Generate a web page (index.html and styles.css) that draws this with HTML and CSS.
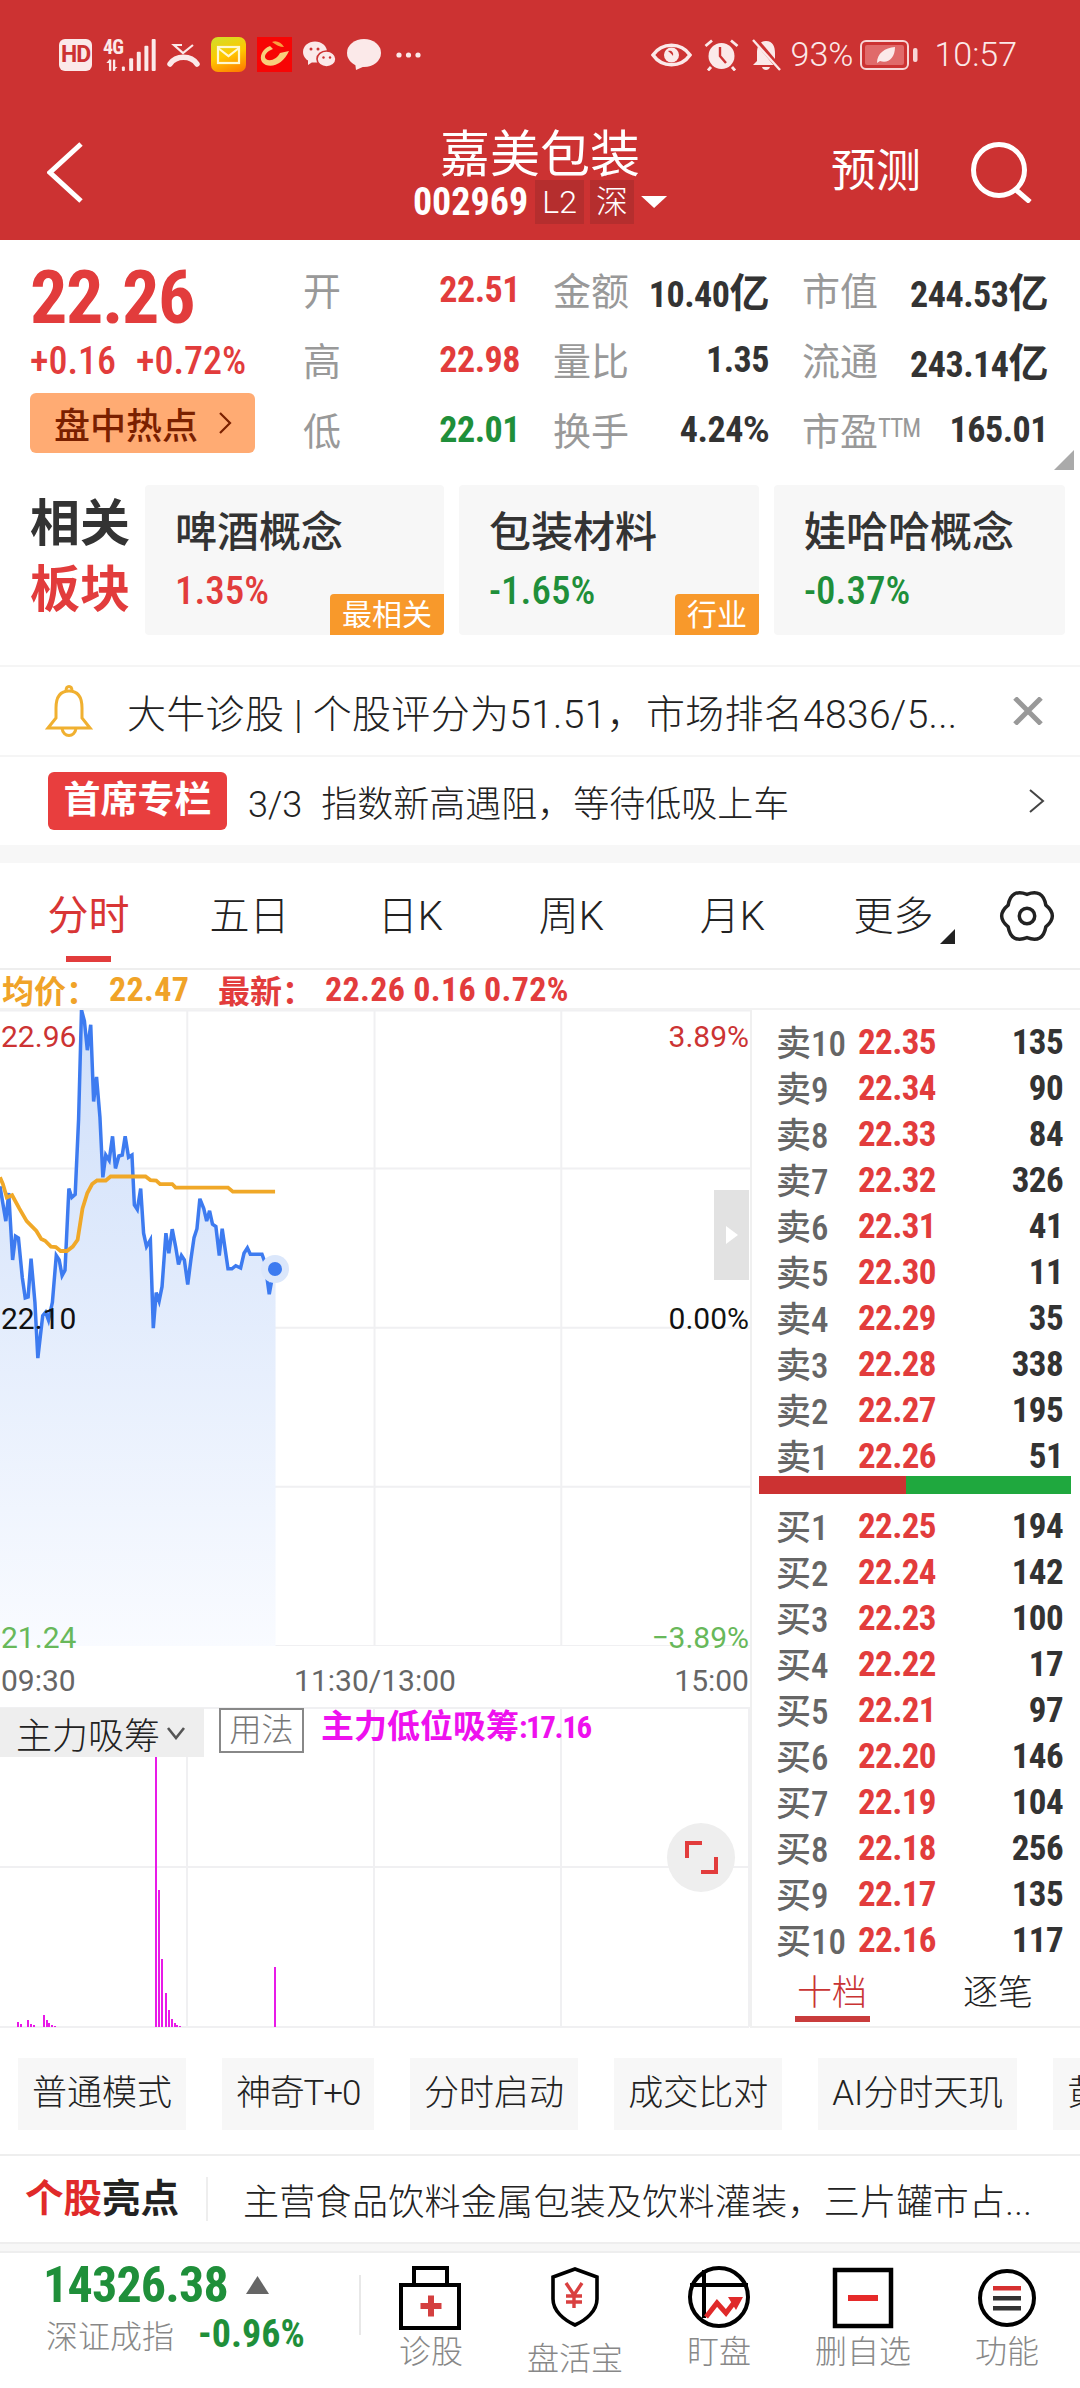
FILE: index.html
```html
<!DOCTYPE html>
<html lang="zh-CN">
<head>
  <meta charset="UTF-8">
  <meta name="viewport" content="width=device-width, initial-scale=1.0">
  <title>嘉美包装</title>
  <link rel="stylesheet" href="styles.css">
</head>
<body>
  <div class="page">
    <header class="topbar">
      <div class="status">
        <div class="status-left">
          <span class="hd">HD</span>
          <span class="signal">
            <span class="sig-text">4G</span>
            <svg class="i-signal" viewBox="0 0 160 96">
              <rect x="18" y="62" width="7" height="34" fill="#fbe9e9"/>
              <path d="M10 72L21 60L21 72Z" fill="#fbe9e9"/>
              <rect x="30" y="62" width="7" height="34" fill="#fbe9e9"/>
              <path d="M30 84L44 84L30 96Z" fill="#fbe9e9"/>
              <rect x="57" y="83" width="9" height="13" rx="3" fill="#fbe9e9"/>
              <rect x="79" y="58" width="12" height="38" rx="3" fill="#fbe9e9"/>
              <rect x="102" y="38" width="12" height="58" rx="3" fill="#fbe9e9"/>
              <rect x="125" y="20" width="12" height="76" rx="3" fill="#fbe9e9"/>
              <rect x="147" y="0" width="12" height="96" rx="3" fill="#fbe9e9"/>
            </svg>
          </span>
          <svg class="i-call" viewBox="0 0 33 25">
            <path d="M15 3H7L16 11L26 3" fill="none" stroke="#fbe9e9" stroke-width="2.2"/>
            <path d="M3 22C9 13 24 13 30 22" fill="none" stroke="#fbe9e9" stroke-width="5.5" stroke-linecap="round"/>
          </svg>
          <span class="app-mail">
            <svg viewBox="0 0 35 35">
              <rect x="7" y="10" width="21" height="16" fill="none" stroke="#fff8d0" stroke-width="2.2"/>
              <path d="M7 11L17.5 19L28 11" fill="none" stroke="#fff8d0" stroke-width="2.2"/>
            </svg>
          </span>
          <svg class="i-app" viewBox="0 0 35 35">
            <rect width="35" height="35" fill="#f70505"/>
            <path d="M5 25C12 33 26 28 32 14L23 16C20 22 13 25 9 22C6 19 10 14 16 12L13 9C5 12 2 20 5 25Z" fill="#f8cf7c"/>
            <path d="M15 5C19 3 24 5 27 10C23 10 19 8 15 5Z" fill="#f8a040"/>
          </svg>
          <svg class="i-wechat" viewBox="0 0 33 27">
            <ellipse cx="12" cy="11" rx="12" ry="10.5" fill="#fbe9e9"/>
            <path d="M5 18L5 24L11 20Z" fill="#fbe9e9"/>
            <ellipse cx="23.5" cy="18" rx="9.5" ry="8" fill="#fbe9e9" stroke="#cc3232" stroke-width="1.6"/>
            <circle cx="8" cy="8" r="1.5" fill="#cc3232"/>
            <circle cx="15" cy="8" r="1.5" fill="#cc3232"/>
            <circle cx="20.5" cy="16.5" r="1.2" fill="#cc3232"/>
            <circle cx="27" cy="16.5" r="1.2" fill="#cc3232"/>
          </svg>
          <svg class="i-msg" viewBox="0 0 34 31">
            <ellipse cx="17" cy="14" rx="17" ry="14" fill="#fbe9e9"/>
            <path d="M8 23L9 31L18 27Z" fill="#fbe9e9"/>
          </svg>
          <svg class="i-dots" viewBox="0 0 25 6">
            <circle cx="3" cy="3" r="2.6" fill="#fbe9e9"/>
            <circle cx="12.5" cy="3" r="2.6" fill="#fbe9e9"/>
            <circle cx="22" cy="3" r="2.6" fill="#fbe9e9"/>
          </svg>
        </div>
        <div class="status-right">
          <svg class="i-eye" viewBox="0 0 41 24">
            <path d="M2 12C11 -1 30 -1 39 12C30 25 11 25 2 12Z" fill="none" stroke="#fbe9e9" stroke-width="3.6"/>
            <circle cx="20.5" cy="12" r="7.5" fill="#fbe9e9"/>
            <path d="M17 8C20 7 23 9 22 13C21 11 19 10 17 8Z" fill="#cc3232"/>
          </svg>
          <svg class="i-alarm" viewBox="0 0 35 32">
            <circle cx="17.5" cy="17" r="13" fill="#fbe9e9"/>
            <path d="M1.5 7L8 1.5M27 1.5L33.5 7M7 28L4 31.5M28 28L31 31.5" stroke="#fbe9e9" stroke-width="2.8" fill="none"/>
            <path d="M16 8V17L22 24" stroke="#cc3232" stroke-width="2.4" fill="none"/>
          </svg>
          <svg class="i-bell" viewBox="0 0 31 33">
            <path d="M15 3C8 3 6 9 6 15V23L2 27H28L24 23V15C24 9 22 3 15 3Z" fill="#fbe9e9"/>
            <path d="M11 29C12 33 18 33 19 29Z" fill="#fbe9e9"/>
            <path d="M3 0L30 32" stroke="#cc3232" stroke-width="5"/>
            <path d="M2 2L29 32" stroke="#fbe9e9" stroke-width="2.4"/>
          </svg>
          <span class="st-text st-pct">93%</span>
          <svg class="i-batt" viewBox="0 0 59 30">
            <rect x="1" y="1" width="47" height="28" rx="5" fill="none" stroke="#f7d6d6" stroke-width="2"/>
            <rect x="5" y="5" width="39" height="20" rx="2" fill="#e06a6a"/>
            <rect x="53" y="8" width="4.5" height="14" rx="2" fill="#f7d6d6"/>
            <path d="M17 23C17 13 25 8 35 7C35 18 28 24 20 21Z" fill="#fbe9e9"/>
          </svg>
          <span class="st-text st-time">10:57</span>
        </div>
      </div>
      <nav class="navbar">
        <div class="nav-side">
          <svg class="i-back" viewBox="0 0 36 61">
            <path d="M34 2L3 30.5L34 59" fill="none" stroke="#fff" stroke-width="5"/>
          </svg>
        </div>
        <div class="nav-title">
          <div class="stock-name">嘉美包装</div>
          <div class="stock-sub">
            <span class="stock-code num">002969</span>
            <span class="sub-box box-l2">L2</span>
            <span class="sub-box box-sz">深</span>
            <span class="sub-arrow"></span>
          </div>
        </div>
        <div class="nav-side nav-right">
          <span class="nav-link">预测</span>
          <svg class="i-search" viewBox="0 0 62 61">
            <circle cx="28" cy="28" r="25.5" fill="none" stroke="#fff" stroke-width="5"/>
            <path d="M44 47L59 60" stroke="#fff" stroke-width="5"/>
          </svg>
        </div>
      </nav>
    </header>

    <section class="quote">
      <div class="quote-main">
        <div class="price num">22.26</div>
        <div class="change num"><span>+0.16</span><span>+0.72%</span></div>
        <div class="hot-btn">盘中热点
          <svg class="i-hot" viewBox="0 0 14 24"><path d="M2 2L12 12L2 22" fill="none" stroke="#7a2000" stroke-width="2.2"/></svg>
        </div>
      </div>
      <div class="stats">
        <div class="stat"><span class="lbl">开</span><span class="val num up">22.51</span></div>
        <div class="stat"><span class="lbl">金额</span><span class="val num">10.40<i class="unit">亿</i></span></div>
        <div class="stat"><span class="lbl">市值</span><span class="val num">244.53<i class="unit">亿</i></span></div>
        <div class="stat"><span class="lbl">高</span><span class="val num up">22.98</span></div>
        <div class="stat"><span class="lbl">量比</span><span class="val num">1.35</span></div>
        <div class="stat"><span class="lbl">流通</span><span class="val num">243.14<i class="unit">亿</i></span></div>
        <div class="stat"><span class="lbl">低</span><span class="val num down">22.01</span></div>
        <div class="stat"><span class="lbl">换手</span><span class="val num">4.24<i class="pct">%</i></span></div>
        <div class="stat"><span class="lbl">市盈<small class="num">TTM</small></span><span class="val num">165.01</span></div>
      </div>
      <span class="corner"></span>
    </section>

    <section class="sectors">
      <div class="sector-title">相关<br><em>板块</em></div>
      <div class="sector-card">
        <div class="sector-name">啤酒概念</div>
        <div class="sector-pct num up">1.35%</div>
        <span class="sector-tag">最相关</span>
      </div>
      <div class="sector-card">
        <div class="sector-name">包装材料</div>
        <div class="sector-pct num down">-1.65%</div>
        <span class="sector-tag tag-small">行业</span>
      </div>
      <div class="sector-card">
        <div class="sector-name">娃哈哈概念</div>
        <div class="sector-pct num down">-0.37%</div>
      </div>
    </section>

    <section class="notice">
      <svg class="i-notice" viewBox="0 0 48 54">
        <path d="M24 7C14 7 11 15 11 24V34L3 44H45L37 34V24C37 15 34 7 24 7Z" fill="none" stroke="#f0b030" stroke-width="3"/>
        <path d="M21 7C21 1 27 1 27 7" fill="none" stroke="#f0b030" stroke-width="3"/>
        <path d="M17 44C18 54 30 54 31 44" fill="none" stroke="#f0b030" stroke-width="3"/>
      </svg>
      <span class="notice-text">大牛诊股 | 个股评分为51.51，市场排名4836/5...</span>
      <svg class="i-close" viewBox="0 0 30 28"><path d="M2 1L28 27M28 1L2 27" stroke="#999" stroke-width="5"/></svg>
    </section>
    <section class="column">
      <span class="column-badge">首席专栏</span>
      <span class="column-text"><span class="column-no">3/3</span>指数新高遇阻，等待低吸上车</span>
      <svg class="i-more" viewBox="0 0 17 24"><path d="M2 1L15 12L2 23" fill="none" stroke="#444" stroke-width="2"/></svg>
    </section>
    <div class="band"></div>

    <div class="tabs">
      <span class="tab active">分时</span>
      <span class="tab">五日</span>
      <span class="tab">日K</span>
      <span class="tab">周K</span>
      <span class="tab">月K</span>
      <span class="tab tab-more">更多</span>
      <svg class="i-gear" viewBox="-2 -2 58 58">
        <path d="M27 4.5Q43.5 -1.6 46.5 15.75Q60 27 46.5 38.25Q43.5 55.6 27 49.5Q10.5 55.6 7.5 38.25Q-6 27 7.5 15.75Q10.5 -1.6 27 4.5Z" fill="none" stroke="#222" stroke-width="3.6"/>
        <circle cx="27" cy="27" r="8" fill="none" stroke="#222" stroke-width="3.6"/>
      </svg>
    </div>
    <div class="legend num">
      <span class="lg-avg lg-key">均价：</span><span class="lg-avg lg-val">22.47</span>
      <span class="lg-new lg-key lg-gap">最新：</span><span class="lg-new">22.26 0.16 0.72%</span>
    </div>

    <main class="board">
      <div class="charts">
        <div class="chart">
          <svg class="chart-svg" viewBox="0 45 1546 1425" preserveAspectRatio="none">
            <defs>
              <linearGradient id="area" x1="0" y1="0" x2="0" y2="1">
                <stop offset="0" stop-color="#cfdffa"/>
                <stop offset="1" stop-color="#f9fbff"/>
              </linearGradient>
            </defs>
            <path class="grid" d="M0 46H1546M0 400H1546M0 757H1546M0 1113H1546M0 1470H1546M386 45V1470M772 45V1470M1157 45V1470"/>
            <polygon fill="url(#area)" points="0,440 12,518 18,455 26,605 32,552 38,556 46,645 52,690 58,688 64,602 72,700 78,825 88,730 94,722 100,740 108,700 116,595 122,605 128,640 134,628 142,445 148,465 155,458 162,290 168,45 174,70 180,135 187,78 193,250 199,195 206,285 212,420 218,370 225,382 232,328 238,400 245,372 252,370 258,328 265,375 272,370 277,482 283,492 290,445 296,545 302,575 310,560 316,758 322,678 328,697 334,665 342,545 348,590 355,536 362,575 368,615 374,595 380,605 387,660 394,600 400,555 406,535 412,468 420,490 426,518 432,495 438,525 445,530 452,595 458,535 470,625 478,625 486,618 496,623 503,590 510,578 516,592 540,592 546,610 555,682 562,640 568,626 568,1470 0,1470"/>
            <polyline class="line-price" points="0,440 12,518 18,455 26,605 32,552 38,556 46,645 52,690 58,688 64,602 72,700 78,825 88,730 94,722 100,740 108,700 116,595 122,605 128,640 134,628 142,445 148,465 155,458 162,290 168,45 174,70 180,135 187,78 193,250 199,195 206,285 212,420 218,370 225,382 232,328 238,400 245,372 252,370 258,328 265,375 272,370 277,482 283,492 290,445 296,545 302,575 310,560 316,758 322,678 328,697 334,665 342,545 348,590 355,536 362,575 368,615 374,595 380,605 387,660 394,600 400,555 406,535 412,468 420,490 426,518 432,495 438,525 445,530 452,595 458,535 470,625 478,625 486,618 496,623 503,590 510,578 516,592 540,592 546,610 555,682 562,640 568,626"/>
            <polyline class="line-avg" points="0,420 6,435 14,465 25,460 40,490 55,518 75,540 85,558 93,562 105,575 115,576 125,585 138,585 150,575 160,560 170,490 180,455 190,435 200,427 218,427 228,418 300,418 310,426 322,427 330,435 355,435 362,443 470,443 480,452 567,452"/>
          </svg>
          <span class="axis-label lb-high">22.96</span>
          <span class="axis-label lb-high lb-right">3.89%</span>
          <span class="axis-label lb-mid">22.10</span>
          <span class="axis-label lb-mid lb-right">0.00%</span>
          <span class="axis-label lb-low">21.24</span>
          <span class="axis-label lb-low lb-right">−3.89%</span>
          <span class="now-dot"></span>
          <span class="side-toggle"></span>
        </div>
        <div class="time-axis"><span>09:30</span><span>11:30/13:00</span><span>15:00</span></div>
        <div class="subchart">
          <svg class="sub-svg" viewBox="0 0 750 321">
            <path class="grid-sub" d="M0 1H749M0 160H749M0 320H749M187 0V320M374 0V320M561 0V320M749 0V320"/>
            <path class="bars" d="M156 320V50M159 320V183M162 320V252M166 320V286M169 320V303M172 320V312M175 320V316M177 320V318M180 320V319M275 320V260M18 320V315M21 320V317M28 320V313M31 320V317M34 320V318M44 320V308M47 320V313M49 320V316M52 320V318M55 320V319"/>
          </svg>
          <div class="sub-head">
            <span class="sub-select">主力吸筹
              <svg class="i-down" viewBox="0 0 20 14"><path d="M2 2L10 12L18 2" fill="none" stroke="#555" stroke-width="2.6"/></svg>
            </span>
            <span class="sub-usage">用法</span>
            <span class="sub-value num">主力低位吸筹<i class="sub-num">:17.16</i></span>
          </div>
          <span class="expand">
            <svg viewBox="0 0 33 33"><path d="M2 17V2H17M31 16V31H16" fill="none" stroke="#e23c3c" stroke-width="4"/></svg>
          </span>
        </div>
      </div>

      <aside class="book num">
        <div class="row"><span class="side">卖10</span><span class="px">22.35</span><span class="qty">135</span></div>
        <div class="row"><span class="side">卖9</span><span class="px">22.34</span><span class="qty">90</span></div>
        <div class="row"><span class="side">卖8</span><span class="px">22.33</span><span class="qty">84</span></div>
        <div class="row"><span class="side">卖7</span><span class="px">22.32</span><span class="qty">326</span></div>
        <div class="row"><span class="side">卖6</span><span class="px">22.31</span><span class="qty">41</span></div>
        <div class="row"><span class="side">卖5</span><span class="px">22.30</span><span class="qty">11</span></div>
        <div class="row"><span class="side">卖4</span><span class="px">22.29</span><span class="qty">35</span></div>
        <div class="row"><span class="side">卖3</span><span class="px">22.28</span><span class="qty">338</span></div>
        <div class="row"><span class="side">卖2</span><span class="px">22.27</span><span class="qty">195</span></div>
        <div class="row"><span class="side">卖1</span><span class="px">22.26</span><span class="qty">51</span></div>
        <div class="ratio"><span class="ratio-buy"></span><span class="ratio-sell"></span></div>
        <div class="row"><span class="side">买1</span><span class="px">22.25</span><span class="qty">194</span></div>
        <div class="row"><span class="side">买2</span><span class="px">22.24</span><span class="qty">142</span></div>
        <div class="row"><span class="side">买3</span><span class="px">22.23</span><span class="qty">100</span></div>
        <div class="row"><span class="side">买4</span><span class="px">22.22</span><span class="qty">17</span></div>
        <div class="row"><span class="side">买5</span><span class="px">22.21</span><span class="qty">97</span></div>
        <div class="row"><span class="side">买6</span><span class="px">22.20</span><span class="qty">146</span></div>
        <div class="row"><span class="side">买7</span><span class="px">22.19</span><span class="qty">104</span></div>
        <div class="row"><span class="side">买8</span><span class="px">22.18</span><span class="qty">256</span></div>
        <div class="row"><span class="side">买9</span><span class="px">22.17</span><span class="qty">135</span></div>
        <div class="row"><span class="side">买10</span><span class="px">22.16</span><span class="qty">117</span></div>
        <div class="book-tabs">
          <span class="book-tab active">十档</span>
          <span class="book-tab">逐笔</span>
        </div>
      </aside>
    </main>

    <div class="chips">
      <span class="chip">普通模式</span>
      <span class="chip chip-tight">神奇T+0</span>
      <span class="chip">分时启动</span>
      <span class="chip">成交比对</span>
      <span class="chip">AI分时天玑</span>
      <span class="chip">黄金坑</span>
    </div>

    <section class="highlight">
      <span class="hl-title"><em>个股</em>亮点</span>
      <span class="hl-text">主营食品饮料金属包装及饮料灌装，三片罐市占...</span>
    </section>
    <div class="band-thin"></div>

    <footer class="bottom">
      <div class="index">
        <div class="index-top"><span class="index-num num">14326.38</span><span class="index-arrow"></span></div>
        <div class="index-sub"><span class="index-name">深证成指</span><span class="index-pct num">-0.96%</span></div>
      </div>
      <div class="bottom-sep"></div>
      <div class="actions">
        <div class="action">
          <svg viewBox="0 0 64 64">
            <rect x="2" y="19" width="58" height="43" fill="none" stroke="#000" stroke-width="4"/>
            <path d="M15 19V2H48V19" fill="none" stroke="#000" stroke-width="4"/>
            <path d="M21.5 40H42.5M32 29.5V50.5" stroke="#d44040" stroke-width="6"/>
          </svg>
          <span>诊股</span>
        </div>
        <div class="action action-low">
          <svg viewBox="0 0 64 64">
            <path d="M32 3L54 11V33C54 45 43 54 32 59C21 54 10 45 10 33V11Z" fill="none" stroke="#000" stroke-width="3.6"/>
            <path d="M23 17L31 29L39 17M31 29V42M23 30H39M23 36H39" fill="none" stroke="#d94040" stroke-width="3.4"/>
          </svg>
          <span>盘活宝</span>
        </div>
        <div class="action">
          <svg viewBox="0 0 64 64">
            <circle cx="32" cy="31" r="29" fill="none" stroke="#000" stroke-width="4"/>
            <path d="M3 19H61M17 4V52" stroke="#000" stroke-width="4" fill="none"/>
            <path d="M19 51L30 37L39 47L49 34" fill="none" stroke="#e02a2a" stroke-width="5"/>
            <path d="M41 31H56L49 44Z" fill="#e02a2a"/>
          </svg>
          <span>盯盘</span>
        </div>
        <div class="action">
          <svg viewBox="0 0 64 64">
            <rect x="4" y="4" width="56" height="56" fill="none" stroke="#000" stroke-width="4.5"/>
            <rect x="17" y="29" width="30" height="6" fill="#e62a2a"/>
          </svg>
          <span>删自选</span>
        </div>
        <div class="action">
          <svg viewBox="0 0 64 64">
            <circle cx="32" cy="32" r="27" fill="none" stroke="#000" stroke-width="4"/>
            <rect x="18" y="20" width="28" height="4.5" fill="#d63030"/>
            <rect x="18" y="30" width="28" height="4.5" fill="#333"/>
            <rect x="18" y="40" width="28" height="4.5" fill="#333"/>
          </svg>
          <span>功能</span>
        </div>
      </div>
    </footer>
  </div>
</body>
</html>
```

FILE: styles.css
```css
* { box-sizing: border-box; }
body {
  margin: 0;
  background: #fff;
  font-family: Roboto, 'Noto Sans CJK SC', sans-serif;
  color: #333;
}
em, i { font-style: normal; }
svg { display: block; flex-shrink: 0; }
.page {
  width: 1080px;
  height: 2388px;
  overflow: hidden;
}
.up { color: #e23c3c; }
.down { color: #1f8f3a; }
.num { font-stretch: 75%; }

/* top bar */
.topbar {
  height: 240px;
  background: #cc3232;
  color: #fff;
}
.status {
  display: flex;
  justify-content: space-between;
  align-items: center;
  height: 35px;
  padding: 0 63px 0 59px;
  position: relative;
  top: 37px;
}
.status-left, .status-right {
  display: flex;
  align-items: center;
}
.status-left { gap: 11px; }
.hd {
  width: 33px;
  height: 32px;
  background: #fbe9e9;
  border-radius: 6px;
  color: #cc3232;
  font-size: 23px;
  font-weight: 700;
  letter-spacing: -1px;
  line-height: 32px;
  text-align: center;
}
.signal {
  position: relative;
  width: 53px;
  height: 32px;
}
.i-signal { width: 53px; height: 32px; }
.sig-text {
  position: absolute;
  left: 0;
  top: 0;
  color: #fbe9e9;
  font-size: 20px;
  font-stretch: 75%;
  font-weight: 700;
  letter-spacing: -0.8px;
  line-height: 16px;
}
.i-call { width: 33px; height: 25px; }
.app-mail {
  width: 35px;
  height: 35px;
  border-radius: 7px;
  background: linear-gradient(160deg, #cfe02c 0%, #ffc800 50%, #ff7400 100%);
}
.i-app { width: 35px; height: 35px; }
.i-wechat { width: 33px; height: 27px; }
.i-msg { width: 34px; height: 31px; }
.i-dots { width: 25px; height: 6px; margin-left: 4px; }
.i-eye { width: 41px; height: 24px; margin-right: 12px; }
.i-alarm { width: 35px; height: 32px; margin-right: 12px; }
.i-bell { width: 31px; height: 33px; margin-right: 9px; }
.st-text {
  color: #fbe9e9;
  font-size: 34px;
  font-weight: 300;
  line-height: 35px;
}
.i-batt { width: 59px; height: 30px; margin: 0 15px 0 7px; }

.navbar {
  display: grid;
  grid-template-columns: 1fr auto 1fr;
  align-items: center;
  height: 94px;
  margin-top: 95px;
  padding: 0 47px;
}
.nav-side {
  display: flex;
  align-items: center;
  margin-bottom: 10px;
}
.nav-right {
  justify-content: flex-end;
  gap: 50px;
}
.i-back { width: 36px; height: 61px; }
.i-search { width: 62px; height: 61px; }
.nav-link { font-size: 45px; line-height: 60px; }
.nav-title { text-align: center; }
.stock-name { font-size: 50px; line-height: 50px; }
.stock-sub {
  display: flex;
  align-items: center;
  justify-content: center;
  height: 44px;
}
.stock-code {
  font-size: 38px;
  font-weight: 700;
  letter-spacing: 0;
  margin-right: 7px;
}
.sub-box {
  height: 44px;
  background: #b52e2e;
  font-size: 32px;
  font-weight: 300;
  line-height: 44px;
  text-align: center;
}
.box-l2 { width: 49px; margin-right: 6px; }
.box-sz { width: 44px; margin-right: 7px; }
.sub-arrow {
  width: 26px;
  height: 12px;
  background: #fff;
  clip-path: polygon(0 0, 100% 0, 50% 100%);
}

/* quote */
.quote {
  display: flex;
  height: 245px;
  position: relative;
}
.quote-main {
  width: 303px;
  padding: 22px 0 0 30px;
}
.price {
  color: #e23c3c;
  font-size: 74px;
  font-weight: 700;
  letter-spacing: -1.4px;
  line-height: 72px;
}
.change {
  display: flex;
  gap: 20px;
  margin-top: 7px;
  color: #e23c3c;
  font-size: 38px;
  font-weight: 500;
  letter-spacing: 0;
  line-height: 40px;
}
.hot-btn {
  display: flex;
  align-items: center;
  width: 225px;
  height: 60px;
  margin-top: 12px;
  padding-left: 24px;
  background: #ffab73;
  border-radius: 6px;
  color: #7a2000;
  font-size: 36px;
  font-weight: 500;
}
.i-hot { width: 14px; height: 24px; margin-left: 20px; }
.stats {
  display: grid;
  grid-template-columns: 217px 216px 246px;
  grid-auto-rows: 70px;
  column-gap: 33px;
  padding-top: 15px;
  height: 225px;
}
.stat {
  display: flex;
  justify-content: space-between;
  align-items: center;
}
.lbl {
  display: flex;
  align-items: center;
  padding-bottom: 4px;
  color: #999;
  font-size: 38px;
}
.lbl small {
  font-size: 25px;
  letter-spacing: -1px;
}
.val {
  font-size: 36px;
  font-weight: 700;
  letter-spacing: -0.5px;
}
.unit { font-size: 40px; }
.pct { font-stretch: 100%; }
.corner {
  position: absolute;
  right: 6px;
  bottom: 15px;
  width: 20px;
  height: 20px;
  background: #aaa;
  clip-path: polygon(100% 0, 100% 100%, 0 100%);
}

/* related sectors */
.sectors {
  display: grid;
  grid-template-columns: 100px 299px 300px 291px;
  gap: 15px;
  height: 150px;
  margin-bottom: 30px;
  padding-left: 30px;
}
.sector-title {
  padding-top: 6px;
  font-size: 50px;
  font-weight: 700;
  line-height: 66px;
}
.sector-title em { color: #e23c3c; }
.sector-card {
  position: relative;
  padding: 23px 0 0 30px;
  background: #f7f7f7;
  border-radius: 4px;
}
.sector-name { font-size: 42px; font-weight: 500; line-height: 50px; }
.sector-pct {
  margin-top: 11px;
  font-size: 39px;
  font-weight: 500;
  letter-spacing: 0;
  line-height: 44px;
}
.sector-tag {
  position: absolute;
  right: 0;
  bottom: 0;
  width: 114px;
  height: 41px;
  background: #f8992b;
  border-radius: 4px 0 4px 0;
  color: #fff;
  font-size: 30px;
  line-height: 41px;
  text-align: center;
}
.tag-small { width: 84px; }

/* notices */
.notice, .column {
  display: flex;
  align-items: center;
  height: 90px;
  border-top: 2px solid #f5f5f5;
}
.i-notice { width: 48px; height: 54px; margin: 0 34px 0 45px; }
.notice-text {
  font-size: 39px;
  font-weight: 300;
  letter-spacing: 0.3px;
  color: #222;
  white-space: nowrap;
}
.i-close { width: 30px; height: 28px; margin-left: auto; margin-right: 37px; }
.column { padding-left: 48px; }
.column-badge {
  width: 179px;
  height: 58px;
  margin-right: 21px;
  background: #e83e3e;
  border-radius: 6px;
  color: #fff;
  font-size: 37px;
  font-weight: 700;
  line-height: 58px;
  text-align: center;
}
.column-text { font-size: 36px; font-weight: 300; color: #222; }
.column-no { margin-right: 19px; }
.i-more { width: 17px; height: 24px; margin-left: auto; margin-right: 35px; }
.band { height: 18px; background: #f7f7f7; }

/* tabs */
.tabs {
  display: flex;
  align-items: center;
  height: 107px;
  padding-left: 8px;
  border-bottom: 2px solid #eee;
  position: relative;
}
.tab {
  position: relative;
  width: 161px;
  height: 105px;
  font-size: 40px;
  font-weight: 300;
  line-height: 107px;
  text-align: center;
  color: #222;
}
.tab.active { color: #d83535; font-size: 41px; font-weight: 400; }
.tab.active::after {
  content: "";
  position: absolute;
  left: 58px;
  bottom: 6px;
  width: 45px;
  height: 6px;
  background: #e23c3c;
}
.tab-more::after {
  content: "";
  position: absolute;
  left: 127px;
  bottom: 24px;
  width: 15px;
  height: 15px;
  background: #222;
  clip-path: polygon(100% 0, 100% 100%, 0 100%);
}
.i-gear { width: 56px; height: 56px; margin-left: auto; margin-right: 25px; }
.legend {
  display: flex;
  align-items: center;
  height: 40px;
  padding-left: 2px;
  border-bottom: 2px solid #f2f2f2;
  font-size: 34px;
  font-weight: 700;
  letter-spacing: 0.3px;
  white-space: nowrap;
}
.lg-key { width: 107px; font-size: 32px; letter-spacing: 0; }
.lg-avg { color: #f0a328; }
.lg-new { color: #e23c3c; }
.lg-gap { margin-left: 29px; }

/* charts */
.board {
  display: flex;
  height: 1018px;
}
.charts { width: 750px; flex-shrink: 0; }
.chart {
  position: relative;
  height: 636px;
}
.chart-svg { width: 750px; height: 636px; }
.grid, .grid-sub {
  fill: none;
  stroke: #f0f0f2;
  stroke-width: 2;
  vector-effect: non-scaling-stroke;
}
.line-price, .line-avg {
  fill: none;
  vector-effect: non-scaling-stroke;
}
.line-price { stroke: #3d7bf0; stroke-width: 3.5; }
.line-avg { stroke: #f0a828; stroke-width: 3.8; }
.axis-label {
  position: absolute;
  left: 1px;
  font-size: 30px;
  line-height: 36px;
  font-weight: 400;
}
.lb-right { left: auto; right: 1px; }
.lb-high { top: 9px; color: #cc3333; }
.lb-mid { top: 291px; color: #111; }
.lb-low { top: 610px; color: #68b85a; }
.now-dot {
  position: absolute;
  left: 268px;
  top: 252px;
  width: 14px;
  height: 14px;
  background: #3d7bf0;
  border-radius: 50%;
  box-shadow: 0 0 0 7px #dbe7fb;
}
.side-toggle {
  position: absolute;
  left: 714px;
  top: 180px;
  width: 35px;
  height: 90px;
  background: #e2e2e2;
}
.side-toggle::after {
  content: "";
  position: absolute;
  left: 12px;
  top: 36px;
  width: 12px;
  height: 18px;
  background: #fff;
  clip-path: polygon(0 0, 100% 50%, 0 100%);
}
.time-axis {
  display: flex;
  justify-content: space-between;
  height: 61px;
  padding: 15px 1px 0;
  color: #666;
  font-size: 30px;
  line-height: 40px;
}
.subchart {
  position: relative;
  height: 321px;
}
.sub-svg { width: 750px; height: 321px; }
.bars { fill: none; stroke: #e81ae8; stroke-width: 2; }
.sub-head {
  position: absolute;
  left: 0;
  top: 1px;
  display: flex;
  align-items: flex-start;
}
.sub-select {
  display: flex;
  align-items: center;
  width: 204px;
  height: 49px;
  padding-left: 16px;
  background: #eee;
  font-size: 36px;
  font-weight: 300;
  color: #222;
}
.i-down { width: 20px; height: 14px; margin-left: 6px; }
.sub-usage {
  width: 85px;
  height: 45px;
  margin-left: 15px;
  border: 2px solid #888;
  background: #fff;
  color: #777;
  font-size: 32px;
  font-weight: 300;
  line-height: 41px;
  text-align: center;
}
.sub-value {
  margin-left: 17px;
  color: #ee11ee;
  font-size: 33px;
  font-weight: 700;
  line-height: 38px;
}
.sub-num { font-size: 31px; letter-spacing: -1.4px; }
.expand {
  position: absolute;
  left: 667px;
  top: 116px;
  display: flex;
  align-items: center;
  justify-content: center;
  width: 68px;
  height: 69px;
  background: #eee;
  border-radius: 50%;
}
.expand svg { width: 33px; height: 33px; }

/* order book */
.book {
  width: 330px;
  padding-top: 5px;
  border-left: 2px solid #f0f0f0;
}
.row {
  display: grid;
  grid-template-columns: 82px 1fr auto;
  align-items: center;
  height: 46px;
  padding: 0 17px 0 24px;
  font-size: 35px;
  font-weight: 500;
  letter-spacing: -0.6px;
}
.side { padding-bottom: 3px; color: #666; letter-spacing: 0; }
.px { color: #e23c3c; font-weight: 700; }
.qty { color: #333; font-weight: 700; }
.ratio {
  display: flex;
  height: 18px;
  margin: 1px 9px 5px 7px;
}
.ratio-buy { width: 147px; background: #cc3232; }
.ratio-sell { flex: 1; background: #1fa83e; }
.book-tabs {
  display: flex;
  gap: 96px;
  height: 69px;
  padding: 15px 0 0 45px;
  border-bottom: 2px solid #f0f0f0;
}
.book-tab {
  position: relative;
  height: 40px;
  font-size: 35px;
  font-weight: 300;
  line-height: 40px;
  color: #222;
}
.book-tab.active { color: #c93333; }
.book-tab.active::after {
  content: "";
  position: absolute;
  left: -2px;
  right: -3px;
  top: 42px;
  height: 6px;
  background: #c93c3c;
}

/* bottom rows */
.chips {
  display: flex;
  gap: 36px;
  height: 126px;
  padding: 30px 0 0 18px;
  overflow: hidden;
}
.chip {
  flex-shrink: 0;
  height: 72px;
  padding: 0 14px;
  background: #f7f7f7;
  font-size: 35px;
  font-weight: 300;
  line-height: 72px;
  color: #222;
}
.chip-tight { letter-spacing: -1.2px; }
.highlight {
  display: flex;
  align-items: center;
  height: 90px;
  border-top: 2px solid #eee;
  border-bottom: 2px solid #eee;
}
.hl-title {
  width: 183px;
  margin-left: 25px;
  border-right: 2px solid #eee;
  font-size: 38.5px;
  font-weight: 700;
  line-height: 44px;
  color: #222;
}
.hl-title em { color: #e02a2a; }
.hl-text {
  margin-left: 35px;
  font-size: 36px;
  font-weight: 300;
  letter-spacing: 0.3px;
  color: #222;
  white-space: nowrap;
}
.band-thin { height: 9px; background: #f7f7f7; border-bottom: 2px solid #eee; }
.bottom {
  display: flex;
  height: 135px;
}
.index { width: 359px; padding: 9px 0 0 43px; }
.index-top { display: flex; align-items: center; height: 46px; }
.index-num {
  color: #1f8f3a;
  font-size: 50px;
  font-weight: 700;
  letter-spacing: -0.8px;
  line-height: 46px;
}
.index-arrow {
  width: 23px;
  height: 18px;
  margin-left: 18px;
  background: #666;
  clip-path: polygon(50% 0, 100% 100%, 0 100%);
}
.index-sub { display: flex; align-items: center; margin-top: 3px; height: 46px; }
.index-name { margin-left: 3px; color: #888; font-size: 32px; font-weight: 300; }
.index-pct {
  margin-left: 24px;
  color: #1f8f3a;
  font-size: 38px;
  font-weight: 700;
  letter-spacing: 0;
}
.bottom-sep {
  width: 2px;
  height: 60px;
  margin-top: 22px;
  background: #e8e8e8;
  flex-shrink: 0;
}
.actions {
  display: grid;
  grid-template-columns: repeat(5, 144px);
  margin-left: -2px;
}
.action {
  display: flex;
  flex-direction: column;
  align-items: center;
  padding-top: 13px;
  color: #888;
  font-size: 32px;
  font-weight: 300;
  line-height: 40px;
}
.action svg { width: 64px; height: 64px; }
.action span { margin-top: 2px; }
.action-low span { margin-top: 9px; }
```
